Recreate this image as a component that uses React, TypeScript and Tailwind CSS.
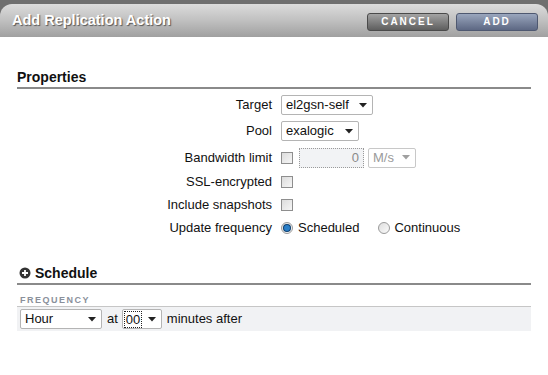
import React from "react";

function Caret({ dim = false }: { dim?: boolean }) {
  return (
    <svg width="8" height="5" viewBox="0 0 8 5" className="shrink-0">
      <path d="M0 0 L8 0 L4 4.5 Z" fill={dim ? "#a0a0a0" : "#222"} />
    </svg>
  );
}

function Select({
  value,
  width,
  dim = false,
  focus = false,
}: {
  value: string;
  width: string;
  dim?: boolean;
  focus?: boolean;
}) {
  return (
    <div
      className={`flex h-[20px] items-center justify-between rounded-[2px] border bg-white pl-[4px] pr-[5px] ${width} ${
        dim ? "border-[#c8c8c8] text-[#9a9a9a]" : "border-[#b4b4b4] text-[#111]"
      }`}
    >
      <span className={focus ? "outline outline-1 outline-dotted outline-[#222] leading-[15px] px-[1px] -ml-[2px]" : ""}>{value}</span>
      <Caret dim={dim} />
    </div>
  );
}

function Check() {
  return (
    <div className="h-[12px] w-[12px] border border-[#8e8e8e] bg-gradient-to-br from-[#dcdcdc] to-[#f6f6f6]" />
  );
}

function Radio({ on }: { on: boolean }) {
  return (
    <div className="flex h-[12px] w-[12px] items-center justify-center rounded-full border border-[#9a9a9a] bg-gradient-to-br from-[#dedede] to-[#fafafa]">
      {on && <div className="h-[6px] w-[6px] rounded-full bg-[#2a7fc8] ring-1 ring-[#0c3f70]" />}
    </div>
  );
}

function Row({ label, h, children }: { label: string; h: string; children: React.ReactNode }) {
  return (
    <div className={`flex items-center ${h}`}>
      <div className="w-[281px] pr-[9px] text-right text-[#111]">{label}</div>
      <div className="flex items-center">{children}</div>
    </div>
  );
}

export default function App() {
  return (
    <div
      className="h-[375px] w-[548px] overflow-hidden bg-[#6f6f6f] pt-[4px] text-[13px]"
      style={{ fontFamily: '"Liberation Sans", Arial, sans-serif' }}
    >
      <div className="flex h-[33px] items-center justify-between rounded-t-[12px] bg-gradient-to-b from-[#dcdcdc] via-[#c0c0c0] to-[#a0a0a0] pl-[12px] pr-[10px]">
        <div className="text-[14.5px] font-bold text-white [text-shadow:1px_1px_1px_#555]">
          Add Replication Action
        </div>
        <div className="flex gap-[7px] pt-[2px]">
          <div className="flex h-[18px] w-[82px] items-center justify-center rounded-[3px] border border-[#4a4a4a] bg-gradient-to-b from-[#a4a4a4] to-[#5e5e5e] text-[10px] font-bold tracking-[2px] text-white">
            CANCEL
          </div>
          <div className="flex h-[18px] w-[82px] items-center justify-center rounded-[3px] border border-[#4e5870] bg-gradient-to-b from-[#9aa6bd] to-[#5d6883] text-[10px] font-bold tracking-[2px] text-white">
            ADD
          </div>
        </div>
      </div>

      <div className="h-[338px] bg-white px-[17px] pt-[32px]">
        <div className="border-b-2 border-[#8a8a8a] pb-[2px] text-[14px] font-bold leading-[16px] text-[#111]">
          Properties
        </div>

        <div className="-ml-[17px] pt-[4px]">
          <Row label="Target" h="h-[24px]">
            <Select value="el2gsn-self" width="w-[92px]" />
          </Row>
          <Row label="Pool" h="h-[28px]">
            <Select value="exalogic" width="w-[78px]" />
          </Row>
          <Row label="Bandwidth limit" h="h-[25px]">
            <Check />
            <div className="ml-[6px] flex h-[20px] w-[65px] items-center justify-end border border-dotted border-[#9a9a9a] bg-[#f2f3f5] pr-[4px] text-[#8a8a8a]">
              0
            </div>
            <div className="ml-[4px]">
              <Select value="M/s" width="w-[48px]" dim />
            </div>
          </Row>
          <Row label="SSL-encrypted" h="h-[24px]">
            <Check />
          </Row>
          <Row label="Include snapshots" h="h-[22px]">
            <Check />
          </Row>
          <Row label="Update frequency" h="h-[23px]">
            <div className="flex items-center">
              <Radio on />
              <span className="ml-[5px] text-[#111]">Scheduled</span>
              <div className="ml-[19px]">
                <Radio on={false} />
              </div>
              <span className="ml-[4px] text-[#111]">Continuous</span>
            </div>
          </Row>
        </div>

        <div className="mt-[26px] flex items-center border-b-2 border-[#8a8a8a] pb-[2px]">
          <svg width="12" height="12" viewBox="0 0 12 12" className="ml-[2px] mr-[4px]">
            <circle cx="6" cy="6" r="5.5" fill="#333" />
            <path d="M6 3 V9 M3 6 H9" stroke="#fff" strokeWidth="1.8" />
          </svg>
          <span className="text-[14px] font-bold leading-[16px] text-[#111]">Schedule</span>
        </div>

        <div className="pl-[3px] pt-[10px] text-[9px] font-bold leading-[11px] tracking-[1.5px] text-[#8a909b]">
          FREQUENCY
        </div>
        <div className="flex h-[25px] items-center border-t border-[#c6c6c6] bg-[#f1f2f4] pl-[3px]">
          <Select value="Hour" width="w-[82px]" />
          <span className="ml-[5px] mr-[4px] text-[#111]">at</span>
          <Select value="00" width="w-[40px]" focus />
          <span className="ml-[5px] text-[#111]">minutes after</span>
        </div>
      </div>
    </div>
  );
}
